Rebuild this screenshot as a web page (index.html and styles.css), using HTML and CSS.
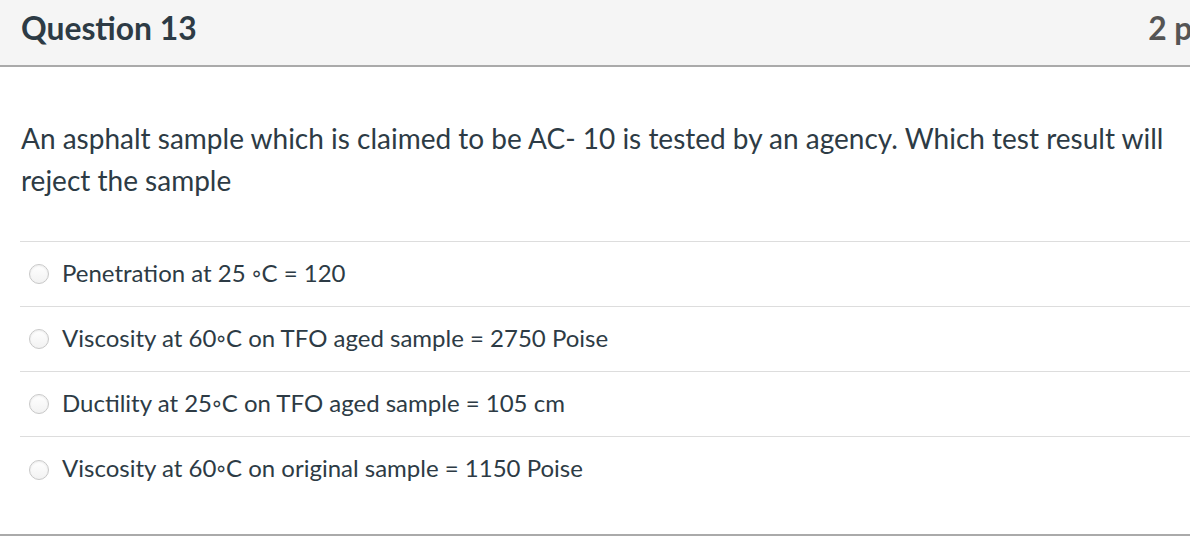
FILE: index.html
```html
<!DOCTYPE html>
<html>
<head>
<meta charset="utf-8">
<link rel="stylesheet" href="styles.css">
</head>
<body>
<div class="question">
  <div class="header">
    <span class="title">Question 13</span>
    <span class="points">2 pts</span>
  </div>
  <div class="content">
    <p class="text">An asphalt sample which is claimed to be AC- 10 is tested by an agency. Which test result will reject the sample</p>
    <div class="answers">
      <label class="answer"><span class="radio"></span><span>Penetration at 25 ◦C = 120</span></label>
      <label class="answer"><span class="radio"></span><span>Viscosity at 60◦C on TFO aged sample = 2750 Poise</span></label>
      <label class="answer"><span class="radio"></span><span>Ductility at 25◦C on TFO aged sample = 105 cm</span></label>
      <label class="answer"><span class="radio"></span><span>Viscosity at 60◦C on original sample = 1150 Poise</span></label>
    </div>
  </div>
</div>
</body>
</html>
```
FILE: styles.css
```css
html, body {
  margin: 0;
  padding: 0;
  background: #fff;
  overflow: hidden;
}
body {
  font-family: Lato, "Open Sans", sans-serif;
  color: #2d3b45;
}
.question {
  width: 1230px;
  border-bottom: 2px solid #aaaaaa;
}
.header {
  box-sizing: border-box;
  background: #f5f5f5;
  border-bottom: 2px solid #aaaaaa;
  display: flex;
  align-items: center;
  justify-content: space-between;
  padding: 0 12px 0 21px;
  height: 67px;
}
.title {
  font-weight: 700;
  font-size: 31.8px;
  margin-top: -10px;
}
.points {
  font-weight: 700;
  font-size: 31.8px;
  color: #555;
  margin-top: -10px;
}
.content {
  padding: 50px 0 0 21px;
}
.text {
  margin: 0;
  font-size: 28px;
  line-height: 42px;
  width: 1160px;
}
.answers {
  margin-top: 40px;
}
.answer {
  display: flex;
  align-items: center;
  height: 64px;
  box-sizing: content-box;
  border-top: 1px solid #dddddd;
  font-size: 24px;
  margin-left: -1px;
  padding-left: 9px;
}
.answer span:last-child {
  margin-top: -3px;
}
.radio {
  width: 20px;
  height: 20px;
  flex: none;
  box-sizing: border-box;
  border: 1px solid #c8c8c8;
  border-radius: 50%;
  background: linear-gradient(#fff, #f2f2f2);
  margin-right: 13px;
  box-shadow: inset 0 1px 2px rgba(0,0,0,0.08);
}
.answer:last-child {
  height: 98px;
  align-items: flex-start;
  padding-top: 19px;
  box-sizing: border-box;
}
.answer:last-child .radio {
  margin-top: 4px;
}
```
